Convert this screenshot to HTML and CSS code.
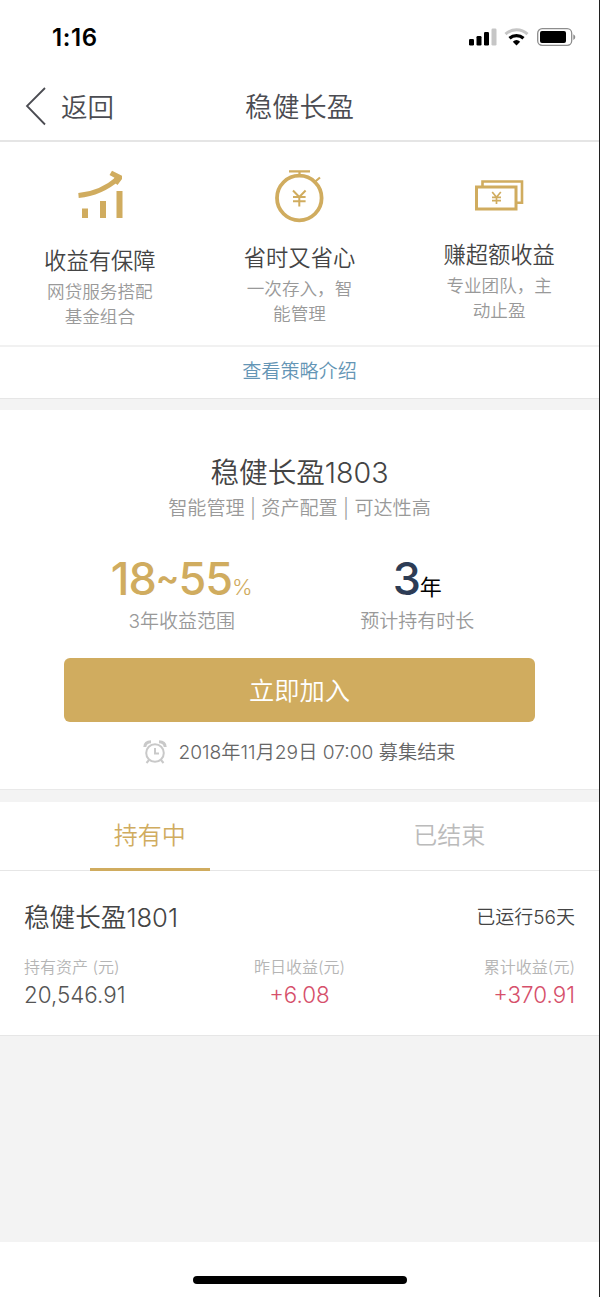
FILE: index.html
```html
<!DOCTYPE html>
<html lang="zh-CN">
<head>
<meta charset="utf-8">
<title>稳健长盈</title>
<link rel="stylesheet" href="styles.css">
</head>
<body>
<main class="screen">
  <header class="status">
    <span class="status-time">1:16</span>
    <svg class="status-icons" width="108" height="20" viewBox="0 0 108 20">
      <rect x="1" y="12" width="5" height="6.500" rx="1.200"/>
      <rect x="8.500" y="9" width="5" height="9.500" rx="1.200"/>
      <rect x="16" y="5" width="5" height="13.500" rx="1.200"/>
      <rect x="23.500" y="1.500" width="5" height="17" rx="1.200" fill="#c6c6c6"/>
      <path d="M37.500 7.200a16 16 0 0 1 22 0" fill="none" stroke="#c6c6c6" stroke-width="3"/>
      <path d="M41.500 11.300a10.500 10.500 0 0 1 14 0" fill="none" stroke="#000" stroke-width="3.200"/>
      <path d="M44.800 14.700a5.600 5.600 0 0 1 7.400 0l-3.700 3.800z"/>
      <rect x="69.700" y="1.700" width="34" height="16.600" rx="4.500" fill="none" stroke="#8d8d8d" stroke-width="1.300"/>
      <rect x="72" y="4" width="26" height="12" rx="2"/>
      <path d="M105.300 7.300v5.600q2-.9 2-2.800t-2-2.800z" fill="#8d8d8d"/>
    </svg>
  </header>
  <nav class="nav">
    <a class="back"><svg width="22" height="40" viewBox="0 0 22 40"><path d="M20 2L2 20l18 18.500" fill="none" stroke="#4b4c52" stroke-width="1.800"/></svg><span>返回</span></a>
    <h1>稳健长盈</h1>
  </nav>
  <section class="features">
    <article class="feature feature-growth">
      <svg width="60" height="60" viewBox="0 0 60 60" fill="#d0ac5f"><path d="M8.500 25.500Q31 23.500 48 8.500" fill="none" stroke="#d0ac5f" stroke-width="5"/><path d="M42 .8L52 5.800V9l-4.500 6-5-4 2-3.300-5-2.700z"/><rect x="12" y="38.500" width="6" height="9.500"/><rect x="30" y="31" width="6" height="17"/><rect x="46.500" y="21" width="6" height="27"/></svg>
      <h2>收益有保障</h2><p>网贷服务搭配<br>基金组合</p>
    </article>
    <article class="feature feature-time">
      <svg width="60" height="60" viewBox="0 0 60 60" fill="none" stroke="#d0ac5f"><circle cx="30.300" cy="28" r="22.300" stroke-width="3.800"/><path d="M20 1.400h21M30.500 1v5M44.500 13l6.500-5.500" stroke-width="2.200"/><path d="M24 20.500l6.300 6.500 6.300-6.500M30.300 27v9.500M24 26.900h12.600M24 31.300h12.600" stroke-width="2"/></svg>
      <h2>省时又省心</h2><p>一次存入，智<br>能管理</p>
    </article>
    <article class="feature feature-cash">
      <svg width="60" height="60" viewBox="0 0 60 60" fill="none" stroke="#d0ac5f"><path d="M13.500 17v-5.500h39.500v21.300H48" stroke-width="2.600"/><rect x="7.500" y="17" width="39.500" height="22" stroke-width="3"/><path d="M23.200 22l4.300 5.200 4.300-5.200M27.500 27v7M23 27.400h9M23 30.600h9" stroke-width="1.700"/></svg>
      <h2>赚超额收益</h2><p>专业团队，主<br>动止盈</p>
    </article>
  </section>
  <a class="strategy">查看策略介绍</a>
  <section class="product">
    <h2 class="product-title">稳健长盈<span>1803</span></h2>
    <p class="product-tags">智能管理 | 资产配置 | 可达性高</p>
    <div class="stats">
      <div class="stat"><p class="figure gold"><b>18<span class="tilde">~</span>55</b><small>%</small></p><p class="caption">3年收益范围</p></div>
      <div class="stat"><p class="figure navy"><b>3</b><small>年</small></p><p class="caption">预计持有时长</p></div>
    </div>
    <button class="join">立即加入</button>
    <p class="deadline"><svg width="24" height="24" viewBox="0 0 24 24" fill="none" stroke="#c9c9c9" stroke-width="2"><circle cx="12" cy="13" r="8.800"/><path d="M12 8v5.500h4"/><path d="M1.800 7Q2 2 8 1.800M16 1.800Q22 2 22.200 7" stroke-width="3"/><path d="M6 20l-2.500 3M18 20l2.500 3"/></svg><span>2018年11月29日 07:00 募集结束</span></p>
  </section>
  <div class="tabs"><a class="tab active"><span>持有中</span></a><a class="tab"><span>已结束</span></a></div>
  <section class="holding">
    <div class="holding-head"><h3>稳健长盈<span>1801</span></h3><span class="days">已运行56天</span></div>
    <div class="amounts">
      <div><p class="label">持有资产 (元)</p><p class="value">20,546.91</p></div>
      <div class="center"><p class="label">昨日收益(元)</p><p class="value red">+6.08</p></div>
      <div class="right"><p class="label">累计收益(元)</p><p class="value red">+370.91</p></div>
    </div>
  </section>
  <footer class="home"><i></i></footer>
</main>
</body>
</html>
```
FILE: styles.css
```css
* { box-sizing: border-box; }
body, h1, h2, h3, p { margin: 0; font-weight: 350; }
body { background: #f3f3f3; font-family: Inter, "Noto Sans CJK SC", sans-serif; color: #444; }
svg { display: block; flex: none; }
.screen { width: 600px; height: 1297px; border-right: 1px solid #202020; display: flex; flex-direction: column; overflow: hidden; white-space: nowrap; }
.status { height: 72px; flex: none; background: #fff; display: flex; justify-content: space-between; align-items: flex-start; padding: 27px 23px 0 52px; }
.status-time { font-size: 24px; line-height: 22px; letter-spacing: .6px; font-weight: 600; color: #000; }
.nav { height: 70px; flex: none; background: #fff; border-bottom: 2px solid #e5e5e5; display: grid; grid-template-columns: 1fr auto 1fr; align-items: center; }
.back { display: flex; align-items: center; gap: 14px; padding-left: 25px; font-size: 26.5px; line-height: 40px; color: #4b4c52; }
.back span { padding-top: 2px; }
.nav h1 { font-size: 27.200px; line-height: 40px; padding-top: 4px; color: #4b4c52; }
.features { height: 203px; flex: none; background: #fff; display: grid; grid-template-columns: repeat(3, 1fr); }
.feature { display: flex; flex-direction: column; align-items: center; padding-top: 28px; text-align: center; }
.feature svg { margin-bottom: 15px; }
.feature-time svg { margin-bottom: 12px; }
.feature-cash svg { margin-bottom: 9px; }
.feature h2 { font-size: 22.300px; line-height: 32px; color: #444; }
.feature p { font-size: 17.600px; line-height: 25.500px; color: #999; margin-top: 1.5px; }
.strategy { height: 54px; flex: none; background: #fff; border-top: 2px solid #f1f1f1; border-bottom: 1px solid #e6e6e6; text-align: center; font-size: 19.100px; line-height: 49px; color: #6495b5; }
.product { height: 380px; flex: none; background: #fff; margin-top: 11px; border-bottom: 1px solid #e9e9e9; display: flex; flex-direction: column; align-items: center; padding-top: 43px; }
.product-title { font-size: 28.600px; line-height: 40px; color: #444; }
.product-tags { font-size: 19.100px; line-height: 28px; margin-top: 1px; color: #999; }
.stats { width: 471px; display: grid; grid-template-columns: 1fr 1fr; margin-top: 30px; }
.stat { text-align: center; }
.figure { display: flex; justify-content: center; align-items: baseline; height: 54px; line-height: 54px; }
.figure b { font-size: 45px; font-weight: 500; letter-spacing: -1px; }
.figure .tilde { display: inline-block; font-size: 35px; line-height: 1; font-weight: 600; vertical-align: 5px; }
.figure small { font-size: 22px; }
.gold { color: #d0ac5f; }
.gold small { font-weight: 300; }
.navy { color: #2d3c55; }
.navy small { color: #000; font-weight: 400; }
.caption { font-size: 19px; line-height: 28px; color: #999; margin-top: 2px; }
.join { width: 471px; height: 64px; margin-top: 22px; border: 0; border-radius: 6px; background: #d0ac5f; color: #fff; font: 350 25.300px/60px "Noto Sans CJK SC", sans-serif; padding: 0 0 3px; }
.deadline { display: flex; align-items: center; gap: 11px; font-size: 19.200px; line-height: 28px; margin-top: 16px; color: #666; }
.tabs { height: 69px; flex: none; background: #fff; margin-top: 12px; border-bottom: 1px solid #e6e6e6; display: grid; grid-template-columns: 1fr 1fr; }
.tab { display: flex; justify-content: center; font-size: 24px; line-height: 68px; color: #bbb; font-weight: 350; }
.tab span { width: 120px; height: 69px; text-align: center; }
.active span { color: #d0ac5f; border-bottom: 3px solid #d0ac5f; }
.holding { height: 165px; flex: none; background: #fff; border-bottom: 1px solid #e6e6e6; padding: 29px 24px 0; }
.holding-head { display: flex; justify-content: space-between; align-items: center; line-height: 36px; }
.holding-head h3 { font-size: 25.600px; }
.days { font-size: 19px; font-weight: 350; }
.amounts { display: grid; grid-template-columns: 1fr 1fr 1fr; margin-top: 19px; }
.label { font-size: 16px; line-height: 24px; color: #b5b5b5; }
.value { font-size: 22.400px; line-height: 32px; color: #555; }
.center { text-align: center; }
.right { text-align: right; }
.red { color: #d6506b; }
.home { height: 55px; flex: none; margin-top: auto; background: #fff; display: flex; justify-content: center; align-items: flex-start; padding-top: 34px; }
.home i { width: 214px; height: 8px; border-radius: 4px; background: #000; }
.stat .caption { margin-top: 2px; }
```
